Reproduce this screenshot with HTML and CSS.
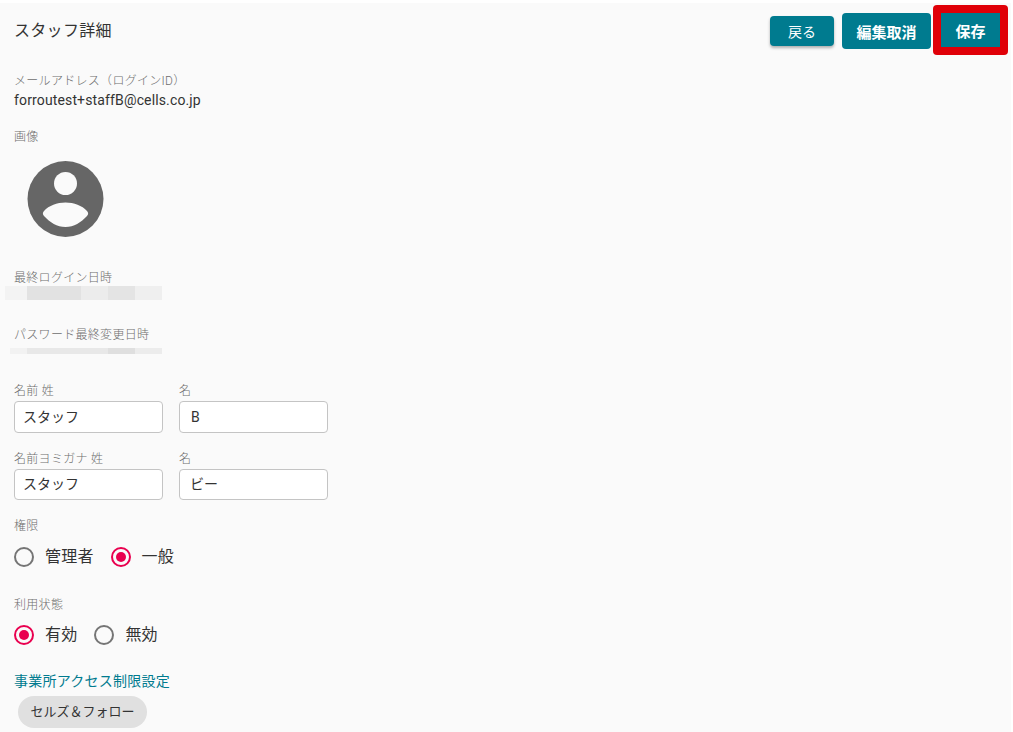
FILE: index.html
```html
<!DOCTYPE html>
<html lang="ja">
<head>
<meta charset="utf-8">
<title>スタッフ詳細</title>
<link rel="stylesheet" href="styles.css">
</head>
<body>
<main class="page">
  <header class="head">
    <h1 class="title">スタッフ詳細</h1>
    <div class="actions">
      <button class="btn btn-back">戻る</button>
      <button class="btn btn-cancel">編集取消</button>
      <span class="highlight"><button class="btn btn-save">保存</button></span>
    </div>
  </header>

  <section class="field email">
    <div class="label">メールアドレス（ログインID）</div>
    <div class="value">forroutest+staffB@cells.co.jp</div>
  </section>

  <section class="field image">
    <div class="label">画像</div>
    <svg class="avatar" viewBox="0 0 77 76" aria-hidden="true">
      <circle cx="38.500" cy="38" r="38" fill="#666"/>
      <circle cx="38.500" cy="22.500" r="11.500" fill="#fafafa"/>
      <path d="M17 50 C22 44.500 30 41.500 38.500 41.500 C47 41.500 55 44.500 60 50 C61.500 51.700 61.500 53.500 60 55 C54 61.500 47 66 38.500 66 C30 66 23 61.500 17 55 C15.500 53.500 15.500 51.700 17 50 Z" fill="#fafafa"/>
    </svg>
  </section>

  <section class="field login">
    <div class="label">最終ログイン日時</div>
    <div class="blur blur-a"></div>
  </section>

  <section class="field pw">
    <div class="label">パスワード最終変更日時</div>
    <div class="blur blur-b"></div>
  </section>

  <section class="name-row first">
    <div class="col"><div class="label">名前 姓</div><div class="input">スタッフ</div></div>
    <div class="col"><div class="label">名</div><div class="input pad-b">B</div></div>
  </section>
  <section class="name-row second">
    <div class="col"><div class="label">名前ヨミガナ 姓</div><div class="input short">スタッフ</div></div>
    <div class="col"><div class="label">名</div><div class="input short pad-y">ビー</div></div>
  </section>

  <section class="field role">
    <div class="label">権限</div>
    <div class="radios">
      <span class="radio"></span><span class="radio-text">管理者</span>
      <span class="radio on"></span><span class="radio-text">一般</span>
    </div>
  </section>

  <section class="field status">
    <div class="label">利用状態</div>
    <div class="radios tight">
      <span class="radio on"></span><span class="radio-text">有効</span>
      <span class="radio"></span><span class="radio-text">無効</span>
    </div>
  </section>

  <a class="link">事業所アクセス制限設定</a>
  <div class="chip">セルズ＆フォロー</div>
</main>
</body>
</html>
```
FILE: styles.css
```css
* { box-sizing: border-box; }
html, body { margin: 0; height: 100%; background: #fff; overflow: hidden; }
body {
  padding: 3px 2px 0 0;
  font-family: Roboto, "Noto Sans CJK JP", sans-serif;
  color: #212121;
}
.page { height: 729px; background: #fafafa; padding: 0 0 0 14px; overflow: hidden; }

.head { display: flex; justify-content: space-between; height: 52px; }
.title { margin: 18px 0 0; font-size: 16px; line-height: 20px; font-weight: 400; color: #333; letter-spacing: .3px; }
.actions { display: flex; align-items: flex-start; padding-right: 3px; }
.btn {
  border: 0; border-radius: 4px; background: #007b8f; color: #fff;
  font-family: inherit; font-size: 14px; padding: 0; display: block;
}
.btn-back { width: 64px; height: 30px; margin-top: 13px; box-shadow: 0 2px 3px rgba(0,0,0,.3); font-weight: 400; }
.btn-cancel { width: 89px; height: 36px; margin: 10px 2px 0 8px; font-weight: 700; font-size: 15px; }
.highlight { display: block; background: #e00008; padding: 8px; border-radius: 4px; margin-top: 2px; }
.btn-save { width: 59px; height: 34px; border-radius: 0; font-weight: 700; font-size: 15px; }

.label { font-size: 12px; line-height: 18px; color: #6e6e6e; letter-spacing: .3px; font-weight: 300; }
.value { font-size: 14px; line-height: 20px; color: #333; letter-spacing: .14px; }
.field { display: block; }
.email { margin-top: 17px; }
.image { margin-top: 18px; }
.avatar { display: block; width: 77px; height: 76px; margin: 15px 0 0 13px; }
.login { margin-top: 32px; }
.pw { margin-top: 26px; }

.blur-a {
  height: 14px; margin: -1px 0 0 -9px; width: 157px;
  background: linear-gradient(90deg, #f3f3f3 0 22px, #e2e2e2 22px 76px, #ececec 76px 103px, #e4e4e4 103px 130px, #efefef 130px 157px);
}
.blur-b {
  height: 6px; margin: 4px 0 0 -4px; width: 152px;
  background: linear-gradient(90deg, #f2f2f2 0 17px, #e8e8e8 17px 98px, #dfdfdf 98px 125px, #ececec 125px 152px);
}

.name-row { display: flex; gap: 16px; }
.first { margin-top: 28px; }
.second { margin-top: 17px; }
.col { width: 149px; }
.col .label { margin-bottom: 1px; }
.input {
  height: 32px; border: 1px solid #c4c4c4; border-radius: 4px; background: #fff;
  font-size: 14px; line-height: 30px; padding-left: 8px; color: #333;
}
.short { height: 31px; line-height: 29px; }
.pad-b { padding-left: 11px; }
.pad-y { padding-left: 10px; }

.role { margin-top: 17px; }
.status { margin-top: 29px; }
.radios { display: flex; align-items: center; height: 20px; margin-top: 12px; }
.radios.tight { margin-top: 11px; }
.radio {
  width: 20px; height: 20px; border-radius: 50%; border: 2px solid #757575;
  display: flex; align-items: center; justify-content: center; flex: none;
}
.radio.on { border-color: #e9004f; }
.radio.on::after { content: ""; width: 10px; height: 10px; border-radius: 50%; background: #e9004f; }
.radio-text { font-size: 16px; line-height: 20px; margin: 0 17px 0 11px; color: #333; letter-spacing: .2px; }

.link { display: block; margin-top: 26px; font-size: 14px; line-height: 20px; color: #007b8f; letter-spacing: .25px; }
.chip {
  width: 129px; height: 32px; margin: 5px 0 0 4px; border-radius: 16px; background: #e0e0e0;
  font-size: 13px; line-height: 32px; text-align: center; color: #333;
}
```
